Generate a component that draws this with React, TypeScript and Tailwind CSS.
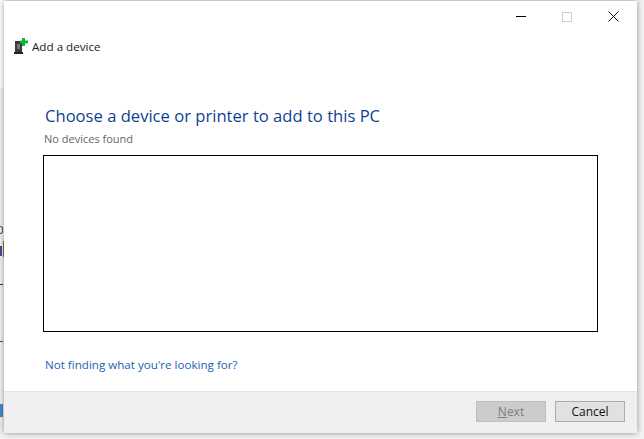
export default function App() {
  return (
    <div className="relative w-[644px] h-[439px] overflow-hidden bg-[#f2f2f2] pl-[4px] pr-[7px] pt-[1px] pb-[6px] font-['Open_Sans','Noto_Sans',sans-serif]">
      <div className="absolute left-0 top-0 w-[4px] h-[88px] bg-white" />
      <div className="absolute left-0 top-[226px] w-[3px] h-[8px] rounded-r-full border-y border-r border-[#555]" />
      <div className="absolute left-0 top-[246px] w-[2px] h-[10px] bg-[#34558f]" />
      <div className="absolute left-[3px] top-[241px] w-[1px] h-[16px] bg-[#a8632a]" />
      <div className="absolute left-0 top-[284px] w-[3px] h-[1px] bg-[#333]" />
      <div className="absolute left-0 top-[341px] w-[3px] h-[8px] border-t border-[#555]" />
      <div className="absolute left-0 top-[404px] w-[3px] h-[13px] bg-[#4a86c8]" />

      <div className="relative flex h-full w-full flex-col bg-white shadow-[0_0_6px_rgba(0,0,0,0.4)]">
        <div className="flex h-[31px] shrink-0 items-center justify-end pr-[1px]">
          <div className="flex h-[30px] w-[46px] items-center justify-center">
            <div className="h-[1px] w-[10px] bg-black" />
          </div>
          <div className="flex h-[30px] w-[46px] items-center justify-center">
            <div className="h-[10px] w-[10px] border border-[#cfcfcf]" />
          </div>
          <div className="flex h-[30px] w-[46px] items-center justify-center">
            <svg width="11" height="11" viewBox="0 0 11 11" fill="none" stroke="#111" strokeWidth="1">
              <path d="M0.5 0.5 L10.5 10.5 M10.5 0.5 L0.5 10.5" />
            </svg>
          </div>
        </div>

        <div className="flex h-[29px] shrink-0 items-center pl-[10px]">
          <svg width="14" height="16" viewBox="0 0 14 16" className="mr-[4px] -translate-y-[1px]">
            <rect x="1" y="3" width="7" height="11" fill="#3b3b3b" />
            <rect x="3" y="6" width="3" height="5" fill="#6d7f78" />
            <rect x="0" y="14" width="9" height="2" fill="#222" />
            <path d="M8 0 H11 V2.5 H14 V5.5 H11 V8 H8 V5.5 H6 V2.5 H8 Z" fill="#12b53a" />
          </svg>
          <span className="text-[11.65px] leading-[16px] text-[#1a1a1a]">Add a device</span>
        </div>

        <div className="flex min-h-0 flex-1 flex-col pl-[39px] pr-[39px] pt-[43px]">
          <h1 className="pl-[2px] text-[16.6px] leading-[24px] font-normal text-[#0f3f94]">Choose a device or printer to add to this PC</h1>
          <p className="mt-[3px] pl-[1px] text-[11px] leading-[15px] text-[#666]">No devices found</p>
          <div className="mt-[9px] h-[177px] shrink-0 border border-black bg-white" />
          <a className="mt-[25px] pl-[2px] text-[11.6px] leading-[16px] text-[#1a5fb0]">Not finding what you're looking for?</a>
        </div>

        <div className="flex h-[42px] shrink-0 items-center justify-end gap-[9px] border-t border-[#e3e3e3] bg-[#f0f0f0] pr-[12px]">
          <button className="flex h-[21px] w-[70px] -translate-y-[1px] items-center justify-center border border-[#bfbfbf] bg-[#cccccc] text-[12px] text-[#7d7d7d]"><span className="underline">N</span>ext</button>
          <button className="flex h-[21px] w-[70px] -translate-y-[1px] items-center justify-center border border-[#adadad] bg-[#e1e1e1] text-[12px] text-[#111]">Cancel</button>
        </div>
      </div>
    </div>
  );
}
